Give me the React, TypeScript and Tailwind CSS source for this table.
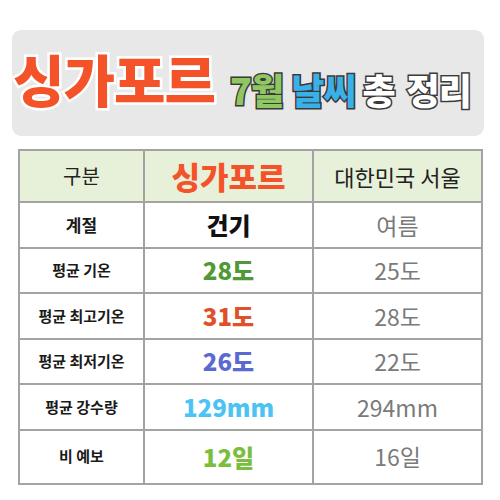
import React from "react"

const font = "[font-family:'Noto_Sans_CJK_KR','Noto_Sans',sans-serif]"

type Row = {
  label: string
  labelSize: string
  sg: string
  sgColor: string
  seoul: string
}

const rows: Row[] = [
  { label: "계절", labelSize: "text-[17px]", sg: "건기", sgColor: "text-[#111111]", seoul: "여름" },
  { label: "평균 기온", labelSize: "text-[15px]", sg: "28도", sgColor: "text-[#4f9a37]", seoul: "25도" },
  { label: "평균 최고기온", labelSize: "text-[15px]", sg: "31도", sgColor: "text-[#e0502a]", seoul: "28도" },
  { label: "평균 최저기온", labelSize: "text-[15px]", sg: "26도", sgColor: "text-[#5a6ad0]", seoul: "22도" },
  { label: "평균 강수량", labelSize: "text-[15px]", sg: "129mm", sgColor: "text-[#4cc3f5]", seoul: "294mm" },
  { label: "비 예보", labelSize: "text-[15px]", sg: "12일", sgColor: "text-[#7bbd3f]", seoul: "16일" },
]

const outline = "[-webkit-text-stroke:3px_#3a3a3a] [paint-order:stroke_fill]"

export default function App() {
  return (
    <div className={`w-[500px] h-[500px] bg-white pt-[30px] px-[12px] ${font}`}>
      {/* 제목 */}
      <div className="h-[106px] w-[472px] rounded-[9px] bg-[#e8e8e8] flex items-end pb-[30px] pl-[1px] whitespace-nowrap">
        <span className="text-[56px] font-black leading-none tracking-[-1px] text-[#f4532a] [-webkit-text-stroke:5px_#ffffff] [paint-order:stroke_fill]">
          싱가포르
        </span>
        <span className={`ml-[15px] mb-[-1px] text-[36px] font-black leading-none tracking-[-1px] text-[#8fc863] ${outline}`}>7월</span>
        <span className={`ml-[8px] mb-[-1px] text-[36px] font-black leading-none tracking-[-1px] text-[#3ab0e8] ${outline}`}>날씨</span>
        <span className={`ml-[7px] mb-[-1px] text-[36px] font-black leading-none text-white ${outline}`}>총</span>
        <span className={`ml-[11px] mb-[-1px] text-[36px] font-black leading-none tracking-[-1px] text-white ${outline}`}>정리</span>
      </div>

      {/* 표 */}
      <table className="mt-[13px] ml-[6px] w-[463px] border-collapse table-fixed">
        <colgroup>
          <col className="w-[125px]" />
          <col className="w-[169px]" />
          <col className="w-[169px]" />
        </colgroup>
        <thead>
          <tr className="h-[52px] bg-[#e7f0d9]">
            <th className="border-2 border-[#a3a3a3] text-[20px] font-normal text-[#222222]">구분</th>
            <th className="border-2 border-[#a3a3a3] text-[31px] font-black text-[#f4532a]">싱가포르</th>
            <th className="border-2 border-[#a3a3a3] text-[22px] font-normal text-[#222222]">대한민국 서울</th>
          </tr>
        </thead>
        <tbody>
          {rows.map((r, i) => (
            <tr key={r.label} className={i === rows.length - 1 ? "h-[54px]" : "h-[45.5px]"}>
              <td className={`border-2 border-[#a3a3a3] text-center font-bold text-[#1a1a1a] ${r.labelSize}`}>{r.label}</td>
              <td className={`border-2 border-[#a3a3a3] text-center text-[24px] font-black ${r.sgColor}`}>{r.sg}</td>
              <td className="border-2 border-[#a3a3a3] text-center text-[23px] font-normal text-[#7a7a7a]">{r.seoul}</td>
            </tr>
          ))}
        </tbody>
      </table>
    </div>
  )
}
